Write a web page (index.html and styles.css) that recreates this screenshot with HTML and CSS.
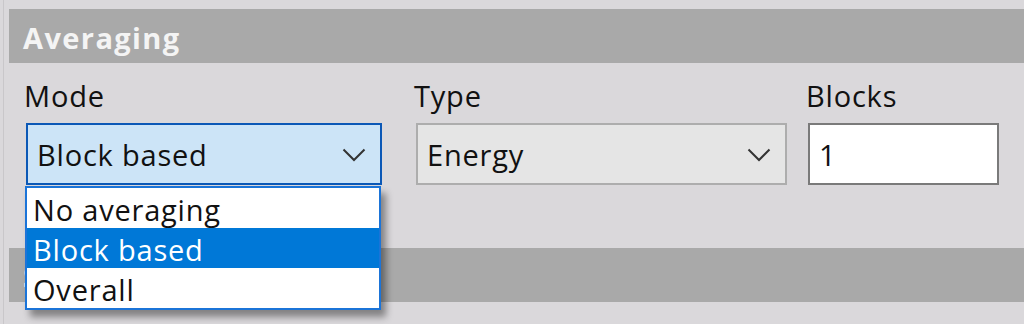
FILE: index.html
```html
<!DOCTYPE html>
<html>
<head>
<meta charset="utf-8">
<link rel="stylesheet" href="styles.css">
</head>
<body>
<div class="panel">
  <div class="section-head">Averaging</div>
  <div class="fields">
    <div class="field mode">
      <div class="label">Mode</div>
      <div class="combo focused">
        <span class="value">Block based</span>
        <svg class="chev" width="24" height="14" viewBox="0 0 24 14"><path d="M1.5 1.5 L12 12 L22.5 1.5" fill="none" stroke="#333" stroke-width="2"/></svg>
      </div>
      <ul class="dropdown">
        <li>No averaging</li>
        <li class="selected">Block based</li>
        <li>Overall</li>
      </ul>
    </div>
    <div class="field type">
      <div class="label">Type</div>
      <div class="combo">
        <span class="value">Energy</span>
        <svg class="chev" width="24" height="14" viewBox="0 0 24 14"><path d="M1.5 1.5 L12 12 L22.5 1.5" fill="none" stroke="#333" stroke-width="2"/></svg>
      </div>
    </div>
    <div class="field blocks">
      <div class="label">Blocks</div>
      <div class="input"><span class="value">1</span></div>
    </div>
  </div>
  <div class="section-head second">Smoothing</div>
</div>
</body>
</html>
```

FILE: styles.css
```css
html, body {
  margin: 0;
  padding: 0;
  background: #dad8db;
  height: 324px;
  overflow: hidden;
}
body {
  font-family: "Open Sans", "Noto Sans", sans-serif;
  font-size: 29px;
  color: #111;
  letter-spacing: 0.8px;
}
.panel {
  margin-left: 3px;
  border-left: 1px solid #c9c7ca;
  padding-left: 5px;
  padding-top: 9px;
  height: 324px;
  box-sizing: border-box;
}
.section-head {
  height: 54px;
  background: #a9a9a9;
  color: #f4f4f4;
  font-weight: 700;
  font-size: 29px;
  line-height: 57px;
  padding-left: 14px;
  letter-spacing: 1.4px;
  overflow: hidden;
}
.fields {
  display: flex;
  padding-left: 17px;
  padding-top: 11px;
  height: 185px;
  box-sizing: border-box;
}
.field {
  display: flex;
  flex-direction: column;
}
.mode { width: 356px; position: relative; }
.type { width: 371px; margin-left: 34px; }
.blocks { width: 191px; margin-left: 21px; }
.label {
  height: 49px;
  line-height: 44px;
  margin-left: -2px;
}
.combo, .input {
  height: 62px;
  box-sizing: border-box;
  border: 2px solid #adadad;
  background: #e5e5e5;
  display: flex;
  align-items: center;
  padding-left: 9px;
  padding-right: 14px;
}
.combo .value { flex: 1; }
.combo.focused {
  border-color: #0b58b6;
  background: #cce4f7;
}
.input {
  background: #fff;
  border-color: #7a7a7a;
}
.chev { display: block; margin-top: 2px; }
.dropdown {
  position: absolute;
  left: -1px;
  top: 112px;
  width: 356px;
  margin: 0;
  padding: 0;
  list-style: none;
  background: #fff;
  border: 2px solid #1b74d8;
  box-sizing: border-box;
  box-shadow: 5px 7px 7px rgba(0, 0, 0, 0.4);
  z-index: 2;
}
.dropdown li {
  height: 40px;
  box-sizing: border-box;
  padding-top: 3px;
  line-height: 37px;
  padding-left: 6px;
}
.dropdown li.selected {
  background: #0078d7;
  color: #fff;
}
.second {
  color: #eee;
}
```
